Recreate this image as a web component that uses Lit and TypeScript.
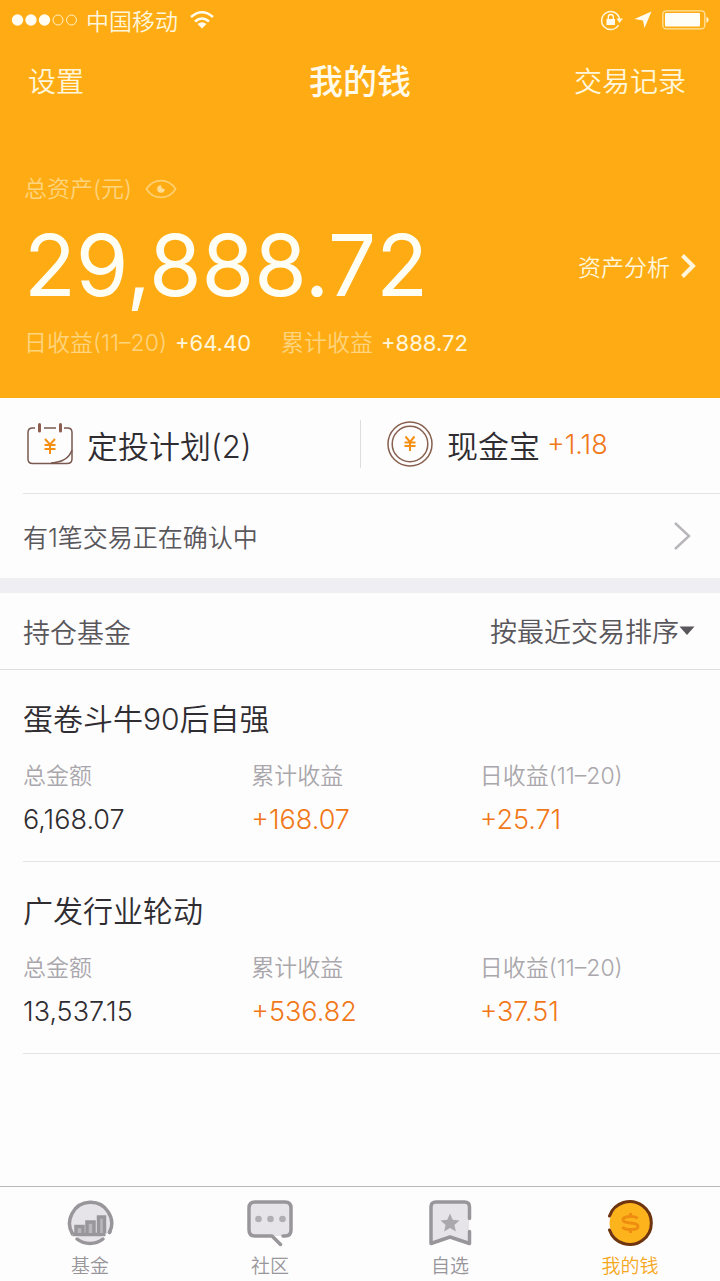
import { LitElement, html, css, svg } from "lit";
import { customElement, property, state } from "lit/decorators.js";

interface Fund {
  name: string;
  total: string;
  gain: string;
  daily: string;
}

const FUNDS: Fund[] = [
  { name: "蛋卷斗牛90后自强", total: "6,168.07", gain: "+168.07", daily: "+25.71" },
  { name: "广发行业轮动", total: "13,537.15", gain: "+536.82", daily: "+37.51" },
];

const TAB_ICONS = {
  fund: svg`
    <circle cx="24" cy="24" r="20" fill="#e6e4e8"/>
    <path d="M6.500 35 A21 21 0 1 1 43.500 33.500" stroke="#98969a" stroke-width="3.500" stroke-linecap="round"/>
    <path d="M6 35.500 H44 L38 42 H10Z" fill="#fefdfe"/>
    <path d="M11 39 A21 21 0 0 0 37 39 L35 37 H13Z" fill="#e6e4e8"/>
    <path d="M11 40 A21 21 0 0 0 37 40" stroke="#98969a" stroke-width="3.500" stroke-linecap="round"/>
    <path d="M43.500 33.500 L44 32.500" stroke="#98969a" stroke-width="3.500" stroke-linecap="round"/>
    <path d="M6.500 35.500 H39.500" stroke="#98969a" stroke-width="3.500"/>
    <path d="M10 34 V27.500 H17 V34 M21 34 V23 H28 V34 M32.500 34 V18 H38.500 V34" fill="#b9b7bb" stroke="#98969a" stroke-width="3.500"/>`,
  chat: svg`
    <path d="M9 3 H39 Q45 3 45 9 V31 Q45 37 39 37 H9 Q3 37 3 31 V9 Q3 3 9 3Z" fill="#e6e4e8"/>
    <path d="M37 37 H39 Q45 37 45 31 V9 Q45 3 39 3 H9 Q3 3 3 9 V31 Q3 37 9 37 H26 L34.500 45.500" stroke="#98969a" stroke-width="3.500" stroke-linecap="round" stroke-linejoin="round"/>
    <circle cx="12.500" cy="20" r="3.300" fill="#b0aeb2"/><circle cx="24.500" cy="20" r="3.300" fill="#b0aeb2"/><circle cx="36.500" cy="20" r="3.300" fill="#b0aeb2"/>`,
  star: svg`
    <path d="M5 45 V8 Q5 3 10 3 H38 Q43 3 43 8 V45 L24 38Z" fill="#e6e4e8"/>
    <path d="M43.500 19.500 V8 Q43.500 3 38.500 3 H10 Q5 3 5 8 V44.500 L24 38 L43.500 44.500 V32.500" stroke="#98969a" stroke-width="3.500" stroke-linecap="round" stroke-linejoin="round"/>
    <path d="M24 14.500 L26.700 20.800 L33.500 21.400 L28.400 25.900 L29.900 32.500 L24 29 L18.100 32.500 L19.600 25.900 L14.500 21.400 L21.300 20.800Z" fill="#aaa8ac"/>`,
  money: svg`
    <circle cx="24" cy="24" r="20.500" fill="#fdb31c"/>
    <path d="M3.500 17 A21.500 21.500 0 1 1 3.500 31" stroke="#6e3410" stroke-width="3" stroke-linecap="round"/>
    <path d="M31.500 19.500 Q30 17.500 24.500 17.500 Q17 17.500 17 20.600 Q17 23.500 24.500 24 Q32 24.500 32 27.500 Q32 30.500 24.500 30.500 Q18 30.500 16.500 28 M24.500 14 V17.500 M24.500 30.500 V34" stroke="#ee8d10" stroke-width="3"/>`,
};

type TabIcon = keyof typeof TAB_ICONS;

const TABS: { label: string; icon: TabIcon }[] = [
  { label: "基金", icon: "fund" },
  { label: "社区", icon: "chat" },
  { label: "自选", icon: "star" },
  { label: "我的钱", icon: "money" },
];

@customElement("status-bar")
class StatusBar extends LitElement {
  static styles = css`
    :host { display: flex; align-items: center; justify-content: space-between; height: 39px; padding: 0 10px 0 11px; color: #fff6dc; font-size: 23px; }
    .side { display: flex; align-items: center; gap: 8px; }
    .right { gap: 10px; }
    svg { display: block; fill: none; }
  `;
  render() {
    return html`
      <div class="side">
        <svg width="67" height="12" viewBox="0 0 67 12">
          <g fill="#fffdf2"><circle cx="6.500" cy="6" r="5.700"/><circle cx="20" cy="6" r="5.700"/><circle cx="33.500" cy="6" r="5.700"/></g>
          <g stroke="#fff0c4"><circle cx="47" cy="6" r="5"/><circle cx="60.500" cy="6" r="5"/></g>
        </svg>
        <span>中国移动</span>
        <svg width="32" height="20" viewBox="0 0 32 20">
          <g stroke="#fffdf2" stroke-width="2.600"><path d="M5 7 Q16 -2.500 27 7"/><path d="M9 11.500 Q16 5.500 23 11.500"/></g>
          <path d="M11.500 14 Q16 10.500 20.500 14 L16 18.500Z" fill="#fffdf2"/>
        </svg>
      </div>
      <div class="side right">
        <svg width="24" height="22" viewBox="0 0 24 22">
          <path d="M18.500 16 A9 9 0 1 1 19.500 10" stroke="#fff6dc" stroke-width="1.500"/>
          <path d="M16.500 9.500 H23 L19.500 14Z" fill="#fff6dc"/>
          <path d="M6.500 10 H15 V16 H6.500Z" fill="#fffdf2"/>
          <path d="M8.300 10.500 V8 A2.500 2.500 0 0 1 13.300 8 V10.500" stroke="#fffdf2" stroke-width="1.300"/>
        </svg>
        <svg width="18" height="18" viewBox="0 0 18 18"><path d="M17.500 0.500 L10.500 17 L9 9.500 L0.500 8Z" fill="#fffdf2"/></svg>
        <svg width="48" height="20" viewBox="0 0 48 20">
          <rect x="0.800" y="0.800" width="42" height="18" rx="3.500" stroke="#ffe2a0" stroke-width="1.300"/>
          <rect x="3" y="3" width="35" height="13.600" rx="1" fill="#fffef6"/>
          <path d="M44.500 6.500 Q49 9.800 44.500 13Z" fill="#fff6dc"/>
        </svg>
      </div>
    `;
  }
}

@customElement("fund-card")
class FundCard extends LitElement {
  @property({ attribute: false }) fund!: Fund;

  static styles = css`
    :host { display: block; margin-left: 23px; padding: 29px 12px 25px 0; border-bottom: 1px solid #e4e3e5; }
    .name { margin: 0 0 21px; font-size: 30px; line-height: 40px; font-weight: 350; color: #2f2d31; }
    .figures { display: grid; grid-template-columns: repeat(3, 1fr); margin: 0; }
    .figure { display: flex; flex-direction: column; gap: 12px; }
    .term { font-size: 23px; line-height: 32px; color: #a9a7ab; }
    .value { margin: 0; font-size: 27px; line-height: 32px; color: #2f2d31; }
    .up { color: #f07818; }
  `;
  render() {
    const { name, total, gain, daily } = this.fund;
    return html`
      <h3 class="name">${name}</h3>
      <dl class="figures">
        <div class="figure"><dt class="term">总金额</dt><dd class="value">${total}</dd></div>
        <div class="figure"><dt class="term">累计收益</dt><dd class="value up">${gain}</dd></div>
        <div class="figure"><dt class="term">日收益(11–20)</dt><dd class="value up">${daily}</dd></div>
      </dl>
    `;
  }
}

@customElement("app-root")
class AppRoot extends LitElement {
  @state() private active = 3;

  static styles = css`
    :host { display: flex; flex-direction: column; min-height: 100vh; background: #fefdfe; color: #2f2d31; font-family: Inter, "Noto Sans CJK SC", sans-serif; font-weight: 350; }
    * { box-sizing: border-box; }
    svg { display: block; fill: none; flex: none; }
    button, select { margin: 0; padding: 0; border: 0; background: none; font: inherit; color: inherit; }
    a { color: inherit; text-decoration: none; }

    .hero { background: #ffac14; color: #fff6dc; }
    .nav { display: grid; grid-template-columns: 1fr auto 1fr; align-items: center; height: 81px; padding: 0 28px; font-size: 28px; }
    .nav-left { justify-self: start; }
    .nav-right { justify-self: end; padding-right: 6px; }
    .title { margin: 0; font-size: 34px; font-weight: 500; color: #fffaea; }
    .summary { display: flex; flex-direction: column; gap: 17px; padding: 53px 24px 39px; }
    .faint { color: #ffd47e; }
    .label { display: flex; align-items: center; gap: 13px; font-size: 23px; line-height: 32px; }
    .balance { display: flex; align-items: center; justify-content: space-between; }
    .amount { font-size: 85px; line-height: 88px; font-weight: 400; color: #fffef4; }
    .analysis { display: flex; align-items: center; gap: 10px; font-size: 23px; }
    .gains { display: flex; gap: 30px; font-size: 23px; line-height: 32px; }
    .gain { display: flex; gap: 8px; }
    .gain-value { font-size: 22px; font-weight: 400; }

    .inset { margin-left: 23px; border-bottom: 1px solid #e4e3e5; }
    .quick { display: grid; grid-template-columns: 337px 1fr; align-items: center; height: 96px; padding-bottom: 3px; }
    .quick-link { display: flex; align-items: center; gap: 14px; height: 48px; padding-left: 4px; font-size: 31px; }
    .quick-link + .quick-link { padding-left: 26px; border-left: 1px solid #dedde0; }
    .pair { display: flex; align-items: center; gap: 7px; }
    .plus { font-size: 27px; color: #f07818; }
    .pending { display: flex; align-items: center; justify-content: space-between; height: 84px; padding: 0 29px 0 23px; font-size: 25px; color: #59575b; }
    .band { height: 15px; background: #efeef3; }
    .holdings-head { display: flex; align-items: center; justify-content: space-between; height: 77px; padding: 0 25px 0 23px; border-bottom: 1px solid #dedde0; font-size: 27px; color: #59575b; }
    .heading { margin: 0; font: inherit; }
    .sort { display: flex; align-items: center; }
    .sort-select { appearance: none; height: 40px; padding-top: 3px; }

    .tabs { display: grid; grid-template-columns: repeat(4, 1fr); margin-top: auto; height: 95px; padding-top: 12px; border-top: 1px solid #b9b8ba; }
    .tab { display: flex; flex-direction: column; align-items: center; gap: 8px; font-size: 19px; line-height: 24px; color: #98969a; }
    .tab.on { color: #f5a81e; }
  `;

  render() {
    return html`
      <header class="hero">
        <status-bar></status-bar>
        <nav class="nav">
          <button class="nav-left">设置</button>
          <h1 class="title">我的钱</h1>
          <button class="nav-right">交易记录</button>
        </nav>
        <section class="summary">
          <div class="label faint">
            <span>总资产(元)</span>
            <button aria-label="隐藏金额">
              <svg width="32" height="20" viewBox="0 0 34 20">
                <path d="M1.500 10 Q7 1 17 1 T32.500 10 Q27 19 17 19 T1.500 10Z" stroke="#ffcf70" stroke-width="1.800"/>
                <path d="M17 6 A4 4 0 1 0 21 10 Q17.500 10.500 17 6Z" fill="#ffdc94"/>
              </svg>
            </button>
          </div>
          <div class="balance">
            <span class="amount">29,888.72</span>
            <a class="analysis" href="#analysis">资产分析
              <svg width="16" height="24" viewBox="0 0 16 24"><path d="M2.500 1.500 L13 12 L2.500 22.500" stroke="#fff6dc" stroke-width="4"/></svg>
            </a>
          </div>
          <div class="gains">
            <span class="gain"><span class="faint">日收益(11–20)</span><span class="gain-value">+64.40</span></span>
            <span class="gain"><span class="faint">累计收益</span><span class="gain-value">+888.72</span></span>
          </div>
        </section>
      </header>

      <main>
        <div class="quick inset">
          <a class="quick-link" href="#plans">
            <svg width="46" height="42" viewBox="0 0 46 42" stroke="#7a5a50" stroke-width="1.500">
              <path d="M8 5 H5.500 Q1 5 1 9.500 V36 Q1 40.500 5.500 40.500 H40 Q45 40.500 45 36 V9.500 Q45 5 40.500 5 H37 M17 5 H29"/>
              <path d="M24 40 Q41 39 45 27" />
              <path d="M12.500 1.500 V8 M33.500 1.500 V8" stroke="#8d5d4e" stroke-width="3" stroke-linecap="round"/>
              <path d="M18 16 L23 21.500 L28 16 M17.500 22 H28.500 M17.500 26 H28.500 M23 21.500 V31" stroke="#f58f14" stroke-width="2"/>
            </svg>
            <span>定投计划(2)</span>
          </a>
          <a class="quick-link" href="#cash">
            <svg width="46" height="46" viewBox="0 0 46 46" stroke="#87604f" stroke-width="1.500">
              <circle cx="23" cy="23" r="22"/><circle cx="23" cy="23" r="17.800"/>
              <path d="M18.500 15.500 L23 21 L27.500 15.500 M17.500 21.500 H28.500 M17.500 25 H28.500 M23 21 V30" stroke="#f58f14" stroke-width="2"/>
            </svg>
            <span class="pair"><span>现金宝</span><span class="plus">+1.18</span></span>
          </a>
        </div>
        <a class="pending" href="#pending">
          <span>有1笔交易正在确认中</span>
          <svg width="18" height="30" viewBox="0 0 18 30"><path d="M2 2 L16 15 L2 28" stroke="#b7b5b9" stroke-width="2.400"/></svg>
        </a>
        <div class="band"></div>
        <section>
          <div class="holdings-head">
            <h2 class="heading">持仓基金</h2>
            <div class="sort">
              <select class="sort-select" aria-label="排序方式">
                <option>按最近交易排序</option>
                <option>按总金额排序</option>
              </select>
              <svg width="16" height="10" viewBox="0 0 16 10"><path d="M0.500 0.500 H15.500 L8 9Z" fill="#59575b"/></svg>
            </div>
          </div>
          ${FUNDS.map((f) => html`<fund-card .fund=${f}></fund-card>`)}
        </section>
      </main>

      <nav class="tabs">
        ${TABS.map((t, i) => html`
          <a class="tab ${i === this.active ? "on" : ""}" href="#tab-${t.icon}" @click=${() => (this.active = i)}>
            <svg width="48" height="48" viewBox="0 0 48 48">${TAB_ICONS[t.icon]}</svg>
            <span>${t.label}</span>
          </a>`)}
      </nav>
    `;
  }
}
